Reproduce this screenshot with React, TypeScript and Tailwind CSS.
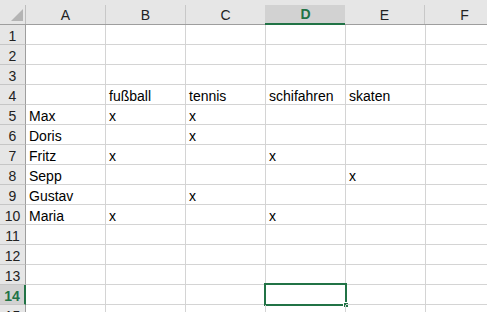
const cols = ['A', 'B', 'C', 'D', 'E', 'F'];

const data: Record<number, string[]> = {
  4: ['', 'fußball', 'tennis', 'schifahren', 'skaten', ''],
  5: ['Max', 'x', 'x', '', '', ''],
  6: ['Doris', '', 'x', '', '', ''],
  7: ['Fritz', 'x', '', 'x', '', ''],
  8: ['Sepp', '', '', '', 'x', ''],
  9: ['Gustav', '', 'x', '', '', ''],
  10: ['Maria', 'x', '', 'x', '', ''],
};

const rows = Array.from({ length: 15 }, (_, i) => i + 1);

export default function App() {
  return (
    <div className="w-[487px] h-[312px] overflow-hidden bg-white text-[14px] leading-[14px] text-black" style={{ fontFamily: '"Liberation Sans", Arial, sans-serif' }}>
      <div className="h-[5px] bg-[#e6e6e6]" />
      {/* column headers */}
      <div className="flex h-[20px] bg-[#e6e6e6] border-b border-[#9e9e9e]">
        <div className="relative w-[26px] shrink-0 border-r border-[#bdbdbd]">
          <svg width="12" height="12" className="absolute left-[11px] top-[4px]" viewBox="0 0 12 12">
            <polygon points="12,0 12,12 0,12" fill="#b4b4b4" />
          </svg>
        </div>
        {cols.map((c) =>
          c === 'D' ? (
            <div key={c} className="w-[80px] shrink-0 -ml-px pl-px bg-[#d2d2d2] border-b-2 border-[#217346] -mb-px flex items-center justify-center text-[#217346] font-bold">
              {c}
            </div>
          ) : (
            <div key={c} className="w-[80px] shrink-0 border-r border-[#c8c8c8] flex items-center justify-center text-[#222]">
              {c}
            </div>
          )
        )}
      </div>
      {rows.map((r) => (
        <div key={r} className="flex h-[20px]">
          <div
            className={`w-[26px] shrink-0 flex items-end justify-center pb-[1px] border-b ${
              r === 14
                ? 'bg-[#d2d2d2] border-r-2 border-r-[#217346] border-b-[#c6c6c6] text-[#217346] font-bold'
                : 'bg-[#e6e6e6] border-r border-r-[#9e9e9e] border-b-[#c6c6c6] text-[#222]'
            }`}
          >
            {r}
          </div>
          {cols.map((c, ci) => (
            <div key={c} className="relative w-[80px] shrink-0 border-r border-b border-[#d4d4d4] flex items-end pl-[3px] pb-[1px] whitespace-nowrap">
              {data[r]?.[ci] ?? ''}
              {r === 14 && c === 'D' && (
                <div className="absolute left-[-2px] top-[-2px] w-[83px] h-[23px] border-2 border-[#217346]">
                  <div className="absolute right-[-4px] bottom-[-4px] w-[6px] h-[6px] bg-[#217346] border border-white" />
                </div>
              )}
            </div>
          ))}
        </div>
      ))}
    </div>
  );
}
